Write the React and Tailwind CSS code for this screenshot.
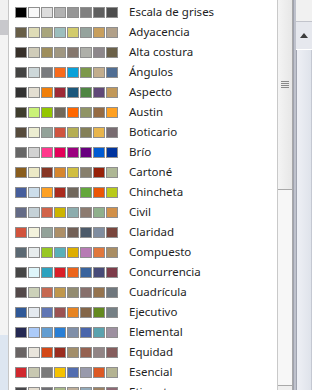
const themes = [
  ['Escala de grises', ['#000000', '#f8f8f8', '#dddddd', '#b2b2b2', '#969696', '#808080', '#5f5f5f', '#4d4d4d']],
  ['Adyacencia', ['#675e47', '#dfdcb7', '#a9a57c', '#9cbebd', '#d2cb6c', '#95a39d', '#c89f5d', '#b1a089']],
  ['Alta costura', ['#37302a', '#d0ccb9', '#9e8e5c', '#a09781', '#85776d', '#aeafa9', '#8d878b', '#6b6149']],
  ['Ángulos', ['#434342', '#cdd7d9', '#797b7e', '#f96a1b', '#08a1d9', '#7c984a', '#c2ad8d', '#506e94']],
  ['Aspecto', ['#323232', '#e3ded1', '#f07f09', '#9f2936', '#1b587c', '#4e8542', '#604878', '#c19859']],
  ['Austin', ['#3e3d2d', '#caf278', '#94c600', '#71685a', '#ff6700', '#909465', '#956b43', '#fea022']],
  ['Boticario', ['#564b3c', '#ecedd1', '#93a299', '#cf543f', '#b5ae53', '#848058', '#e8b54d', '#786c71']],
  ['Brío', ['#666666', '#d2d2d2', '#ff388c', '#e40059', '#9c007f', '#68007f', '#005bd3', '#00349e']],
  ['Cartoné', ['#895d1d', '#ece9c6', '#873624', '#d6862d', '#d0be40', '#877f6c', '#972109', '#aeb795']],
  ['Chincheta', ['#465e9c', '#ccddea', '#fda023', '#aa2b1e', '#71685c', '#64a73b', '#eb5605', '#b9ca1a']],
  ['Civil', ['#646b86', '#c5d1d7', '#d16349', '#ccb400', '#8cadae', '#8c7b70', '#8fb08c', '#d19049']],
  ['Claridad', ['#d2533c', '#f3f2dc', '#93a299', '#ad8f67', '#726056', '#4c5a6a', '#808da0', '#79463d']],
  ['Compuesto', ['#5b6973', '#e7eced', '#98c723', '#59b0b9', '#deae00', '#b77bb4', '#e0773c', '#a98d63']],
  ['Concurrencia', ['#464646', '#def5fa', '#2da2bf', '#da1f28', '#eb641b', '#39639d', '#474b78', '#7d3c4a']],
  ['Cuadrícula', ['#534949', '#ccd1b9', '#c66951', '#bf974d', '#928b70', '#87706b', '#94734e', '#6f777d']],
  ['Ejecutivo', ['#2f5897', '#e4e9ef', '#6076b4', '#9c5252', '#e68422', '#846648', '#63891f', '#758085']],
  ['Elemental', ['#242852', '#accbf9', '#629dd1', '#297fd5', '#7f8fa9', '#4a66ac', '#5aa2ae', '#9d90a0']],
  ['Equidad', ['#696464', '#e9e5dc', '#d34817', '#9b2d1f', '#a28e6a', '#956251', '#918485', '#855d5d']],
  ['Esencial', ['#d1282e', '#c8c8b1', '#7a7a7a', '#f5c201', '#526db0', '#989aac', '#dc5924', '#b4b392']],
  ['Etiqueta', ['#46464a', '#e3dccf', '#6f6f74', '#a7b789', '#beae98', '#92a9b9', '#9c8265', '#8d6974']],
];

const ThemeRow = ({ name, colors }) => (
  <div className="flex h-5 shrink-0 items-start pl-[6px]">
    <div className="mt-[5px] flex gap-px">
      {colors.map((c, i) => (
        <div
          key={i}
          className="h-[11px] w-[12px] border border-[#8f8f8f]"
          style={{ backgroundColor: c }}
        />
      ))}
    </div>
    <span className="ml-[11px] text-[11.5px] leading-5 text-[#1e1e1e]">{name}</span>
  </div>
);

const App = () => {
  return (
    <div
      className="flex h-[390px] w-[312px] overflow-hidden bg-white"
      style={{ fontFamily: '"Noto Sans", "Open Sans", sans-serif' }}
    >
      {/* window behind, left edge */}
      <div className="flex w-[8px] flex-col">
        <div className="h-[20px] bg-[#f1f1f1]" />
        <div className="h-[15px] bg-[#c8c8cc]" />
        <div className="h-[300px] bg-[#f3f3f3]" />
        <div className="flex-1 bg-[#dde6f1]" />
      </div>

      {/* theme list */}
      <div className="flex w-[269px] flex-col border-l border-[#c6c6c6] pt-[2px]">
        {themes.map(([name, colors]) => (
          <ThemeRow key={name} name={name} colors={colors} />
        ))}
      </div>

      {/* list scrollbar */}
      <div className="flex w-[16px] flex-col border-x border-l-[#c9c9c9] border-r-[#a8a8a8]">
        <div className="flex h-[190px] flex-col items-center gap-px border-b border-[#a9a9a9] bg-gradient-to-r from-[#f4f4f4] to-[#e7e7e7] pt-[81px]">
          <div className="h-px w-[8px] bg-[#8a8a8a]" />
          <div className="h-px w-[8px] bg-[#8a8a8a]" />
          <div className="h-px w-[8px] bg-[#8a8a8a]" />
          <div className="h-px w-[8px] bg-[#8a8a8a]" />
        </div>
        <div className="flex-1 bg-[#f7f7f7]" />
        <div className="h-[5px] border-t border-[#a9a9a9] bg-[#efefef]" />
      </div>

      <div className="w-[3px] border-l border-[#9fa2ae] bg-[#bfc2cc]" />

      {/* window behind, right scrollbar */}
      <div className="flex w-[16px] flex-col">
        <div className="h-[22px] border-b border-[#c2c4cc] bg-[#f1f1f1]" />
        <div className="flex h-[27px] items-center justify-center bg-[#e6e8ee]">
          <svg width="8" height="5" viewBox="0 0 8 5">
            <path d="M4 0 L8 5 L0 5 Z" fill="#3c3c3c" />
          </svg>
        </div>
        <div className="mt-px flex-1 border-x border-l-[#a0a4b0] border-r-[#c4c8d2] bg-gradient-to-r from-[#eef0f5] to-[#dfe3eb]" />
      </div>
    </div>
  );
};

export default App;
